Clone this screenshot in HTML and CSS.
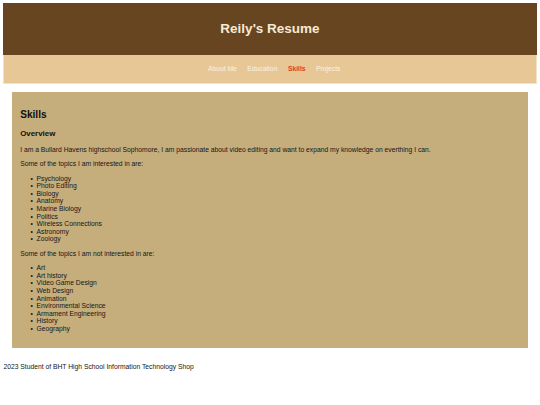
FILE: index.html
```html
<!DOCTYPE html>
<html lang="en">
<head>
<meta charset="utf-8">
<title>Reily's Resume</title>
<link rel="stylesheet" href="styles.css">
</head>
<body>
<header class="site-header">
  <h1 class="site-title">Reily's Resume</h1>
</header>
<nav class="site-nav">
  <ul class="nav-list">
    <li><a class="nav-link" href="#">About Me</a></li>
    <li><a class="nav-link" href="#">Education</a></li>
    <li><a class="nav-link active" href="#">Skills</a></li>
    <li><a class="nav-link" href="#">Projects</a></li>
  </ul>
</nav>
<main class="content">
  <h2 class="section-title">Skills</h2>
  <h3 class="sub-title">Overview</h3>
  <p class="text">I am a Bullard Havens highschool Sophomore, I am passionate about video editing and want to expand my knowledge on everthing I can.</p>
  <p class="text">Some of the topics I am interested in are:</p>
  <ul class="topics">
    <li>Psychology</li>
    <li>Photo Editing</li>
    <li>Biology</li>
    <li>Anatomy</li>
    <li>Marine Biology</li>
    <li>Politics</li>
    <li>Wireless Connections</li>
    <li>Astronomy</li>
    <li>Zoology</li>
  </ul>
  <p class="text">Some of the topics I am not interested in are:</p>
  <ul class="topics">
    <li>Art</li>
    <li>Art history</li>
    <li>Video Game Design</li>
    <li>Web Design</li>
    <li>Animation</li>
    <li>Environmental Science</li>
    <li>Armament Engineering</li>
    <li>History</li>
    <li>Geography</li>
  </ul>
</main>
<footer class="site-footer">
  <p class="text">2023 Student of BHT High School Information Technology Shop</p>
</footer>
</body>
</html>
```

FILE: styles.css
```css
html {
  background: #ffffff;
}

body {
  margin: 3.4px;
  font-family: "Liberation Sans", Arial, sans-serif;
  font-size: 6.75px;
  line-height: 7.6px;
  color: #161616;
}

.site-header {
  background: #664520;
  padding: 9px 0;
  text-align: center;
}

.site-title {
  margin: 9px 0;
  font-size: 13.5px;
  line-height: 15.5px;
  font-weight: bold;
  color: #f6ead6;
}

.site-nav {
  background: #e8c797;
  border: 1px solid #f3e2c8;
  border-top: none;
  padding: 10.2px 0;
}

.nav-list {
  list-style: none;
  margin: 0;
  padding: 0 0 0 8.4px;
  display: flex;
  justify-content: center;
  gap: 10.5px;
}

.nav-link {
  color: #fbf1e0;
  text-decoration: none;
}

.nav-link.active {
  color: #e4392c;
  font-weight: bold;
}

.content {
  display: block;
  margin: 8.4px 8.4px;
  padding: 8.4px;
  background: #c6ad7c;
}

.section-title {
  margin: 8.4px 0;
  font-size: 10.1px;
  line-height: 11.6px;
  font-weight: bold;
  color: #111;
}

.sub-title {
  margin: 7.9px 0;
  font-size: 7.9px;
  line-height: 9.1px;
  font-weight: bold;
  color: #111;
}

.text {
  margin: 6.75px 0;
}

.topics {
  list-style: none;
  margin: 6.75px 0;
  padding-left: 16.9px;
}

.topics li::before {
  content: "\2022";
  display: inline-block;
  width: 6px;
  margin-left: -6.5px;
}

.site-footer {
  display: flow-root;
}

.site-footer .text {
  margin: 6.75px 0;
}
```
